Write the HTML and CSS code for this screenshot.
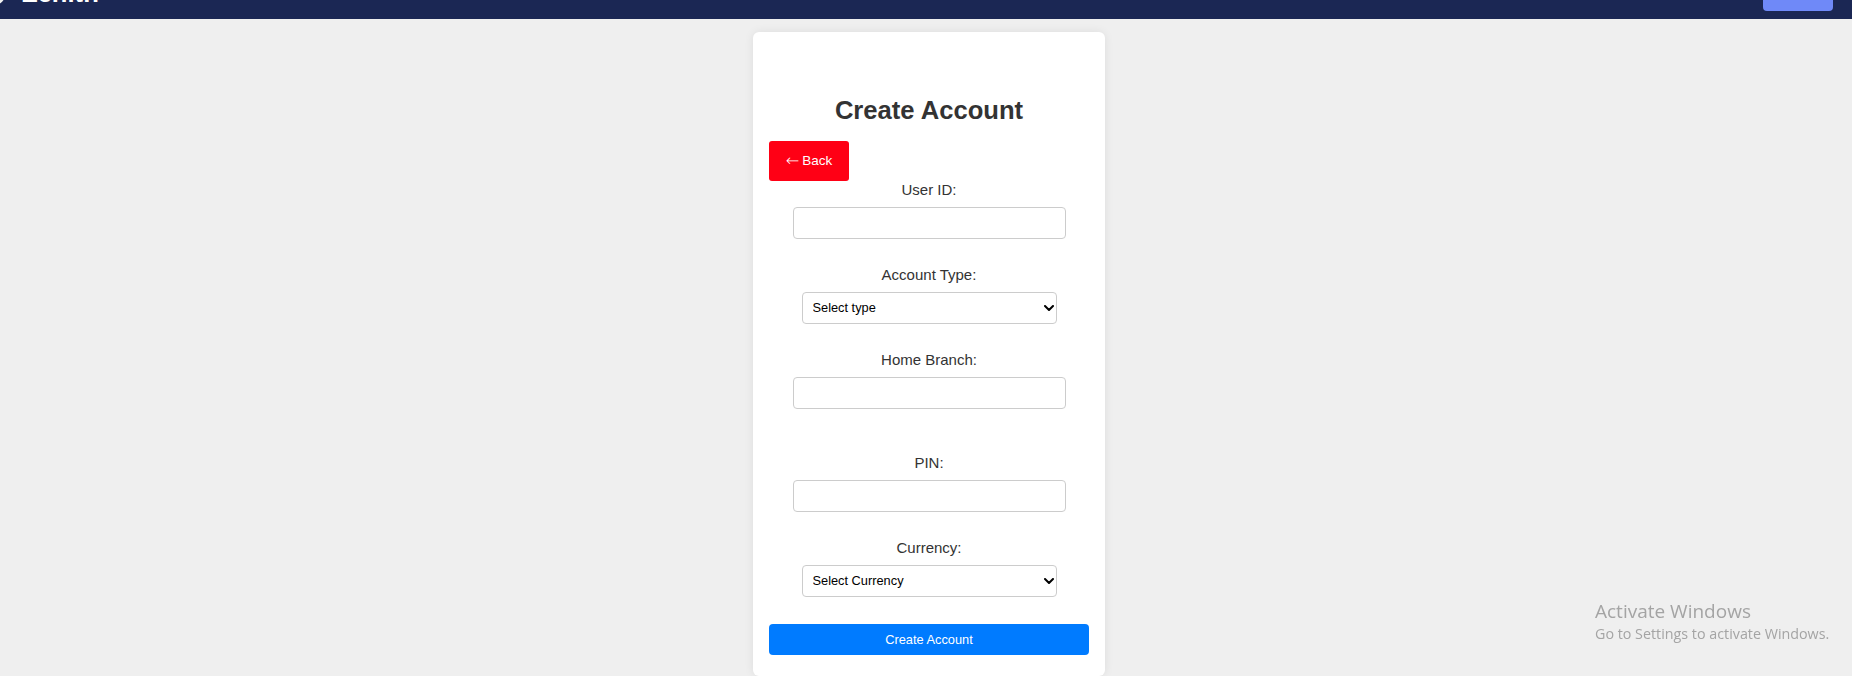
FILE: index.html
```html
<!DOCTYPE html>
<html lang="en">
<head>
<meta charset="utf-8">
<title>Create Account</title>
<link rel="stylesheet" href="styles.css">
</head>
<body>
<header class="topbar">
  <div class="brand">
    <span class="brand-icon"></span>
    <span class="brand-name">Zenith</span>
  </div>
  <button class="nav-btn" type="button" aria-label="Menu"></button>
</header>

<main class="page">
  <section class="card">
    <h2 class="title">Create Account</h2>
    <div class="back-row">
      <button class="back-btn" type="button"><span class="arrow">&larr;</span> Back</button>
    </div>
    <form class="form">
      <div class="group">
        <label class="label" for="uid">User ID:</label>
        <input class="field" id="uid" type="text">
      </div>
      <div class="group">
        <label class="label" for="atype">Account Type:</label>
        <div class="select-wrap">
          <select class="select" id="atype">
            <option>Select type</option>
          </select>
          <svg class="chevron" viewBox="0 0 10 6" width="10" height="6" aria-hidden="true"><path d="M1 1 L5 5 L9 1" fill="none" stroke="#000" stroke-width="2" stroke-linecap="round" stroke-linejoin="round"/></svg>
        </div>
      </div>
      <div class="group">
        <label class="label" for="branch">Home Branch:</label>
        <input class="field" id="branch" type="text">
      </div>
      <div class="spacer"></div>
      <div class="group">
        <label class="label" for="pin">PIN:</label>
        <input class="field" id="pin" type="password">
      </div>
      <div class="group">
        <label class="label" for="cur">Currency:</label>
        <div class="select-wrap">
          <select class="select" id="cur">
            <option>Select Currency</option>
          </select>
          <svg class="chevron" viewBox="0 0 10 6" width="10" height="6" aria-hidden="true"><path d="M1 1 L5 5 L9 1" fill="none" stroke="#000" stroke-width="2" stroke-linecap="round" stroke-linejoin="round"/></svg>
        </div>
      </div>
      <button class="submit" type="button">Create Account</button>
    </form>
  </section>
</main>

<div class="watermark">
  <div class="wm-title">Activate Windows</div>
  <div class="wm-sub">Go to Settings to activate Windows.</div>
</div>
</body>
</html>
```
FILE: styles.css
```css
* { box-sizing: border-box; }

html, body {
  margin: 0;
  padding: 0;
}

body {
  background: #efefef;
  font-family: "Liberation Sans", Arial, sans-serif;
  color: #333;
  overflow: hidden;
  height: 676px;
}

/* header (page is scrolled: only its bottom part shows) */
.topbar {
  margin-top: -41px;
  height: 60px;
  background: #1b2754;
  display: flex;
  justify-content: space-between;
  padding: 0 19px 0 0;
}

.brand {
  display: flex;
  align-items: flex-end;
  gap: 16px;
  padding-bottom: 10px;
}

.brand-icon {
  width: 28px;
  height: 28px;
  border-radius: 50%;
  background: #f2f2f2;
  margin-left: -22px;
  margin-bottom: 3px;
}

.brand-name {
  color: #fff;
  font-weight: bold;
  font-size: 25.6px;
  line-height: 32px;
}

.nav-btn {
  align-self: flex-end;
  width: 70px;
  height: 36px;
  margin-bottom: 8px;
  border: none;
  border-radius: 4px;
  background: #6f89f8;
}

/* card */
.page {
  display: flex;
  justify-content: center;
  padding-top: 13px;
  padding-left: 6px;
}

.card {
  width: 352px;
  background: #fff;
  border-radius: 6px;
  box-shadow: 0 0 10px rgba(0, 0, 0, 0.08);
  padding: 16px 16px 21px;
}

.title {
  margin: 47.6px 0 16px;
  text-align: center;
  font-size: 25.6px;
  font-weight: bold;
  color: #333;
  line-height: normal;
}

.back-row {
  display: flex;
}

.back-btn {
  width: 80px;
  height: 40px;
  border: none;
  border-radius: 3px;
  background: #ff0015;
  color: #fff;
  font-family: "Liberation Sans", Arial, sans-serif;
  font-size: 13.5px;
  padding: 0;
  display: flex;
  align-items: center;
  justify-content: center;
  gap: 3px;
}

.arrow {
  font-family: "DejaVu Sans", sans-serif;
  font-size: 16px;
  font-weight: 300;
  line-height: 1;
}

.form {
  display: flex;
  flex-direction: column;
  align-items: center;
}

.group {
  display: flex;
  flex-direction: column;
  align-items: center;
  margin-bottom: 27px;
}

.label {
  font-size: 15px;
  line-height: 17px;
  color: #333;
  margin-bottom: 9px;
}

.field {
  width: 273px;
  height: 32px;
  border: 1px solid #ccc;
  border-radius: 4px;
  background: #fff;
  padding: 0 8px;
  font-family: "Liberation Sans", Arial, sans-serif;
  font-size: 12.8px;
}

.select-wrap {
  position: relative;
  width: 255px;
  height: 32px;
}

.select {
  appearance: none;
  -webkit-appearance: none;
  width: 100%;
  height: 32px;
  border: 1px solid #ccc;
  border-radius: 4px;
  background: #fff;
  color: #000;
  padding: 0 10px;
  font-family: "Liberation Sans", Arial, sans-serif;
  font-size: 12.8px;
}

.chevron {
  position: absolute;
  right: 3px;
  top: 13px;
  pointer-events: none;
}

.spacer {
  height: 18px;
}

.submit {
  width: 320px;
  height: 31px;
  margin-top: 0;
  border: none;
  border-radius: 4px;
  background: #007bff;
  color: #fff;
  font-family: "Liberation Sans", Arial, sans-serif;
  font-size: 12.8px;
}

/* OS watermark overlay */
.watermark {
  position: fixed;
  left: 1595px;
  top: 599px;
  color: #a4a4a4;
  font-family: "Open Sans", "Noto Sans", sans-serif;
}

.wm-title {
  font-size: 19px;
  line-height: 25px;
}

.wm-sub {
  font-size: 14.3px;
  line-height: 19px;
}
```
